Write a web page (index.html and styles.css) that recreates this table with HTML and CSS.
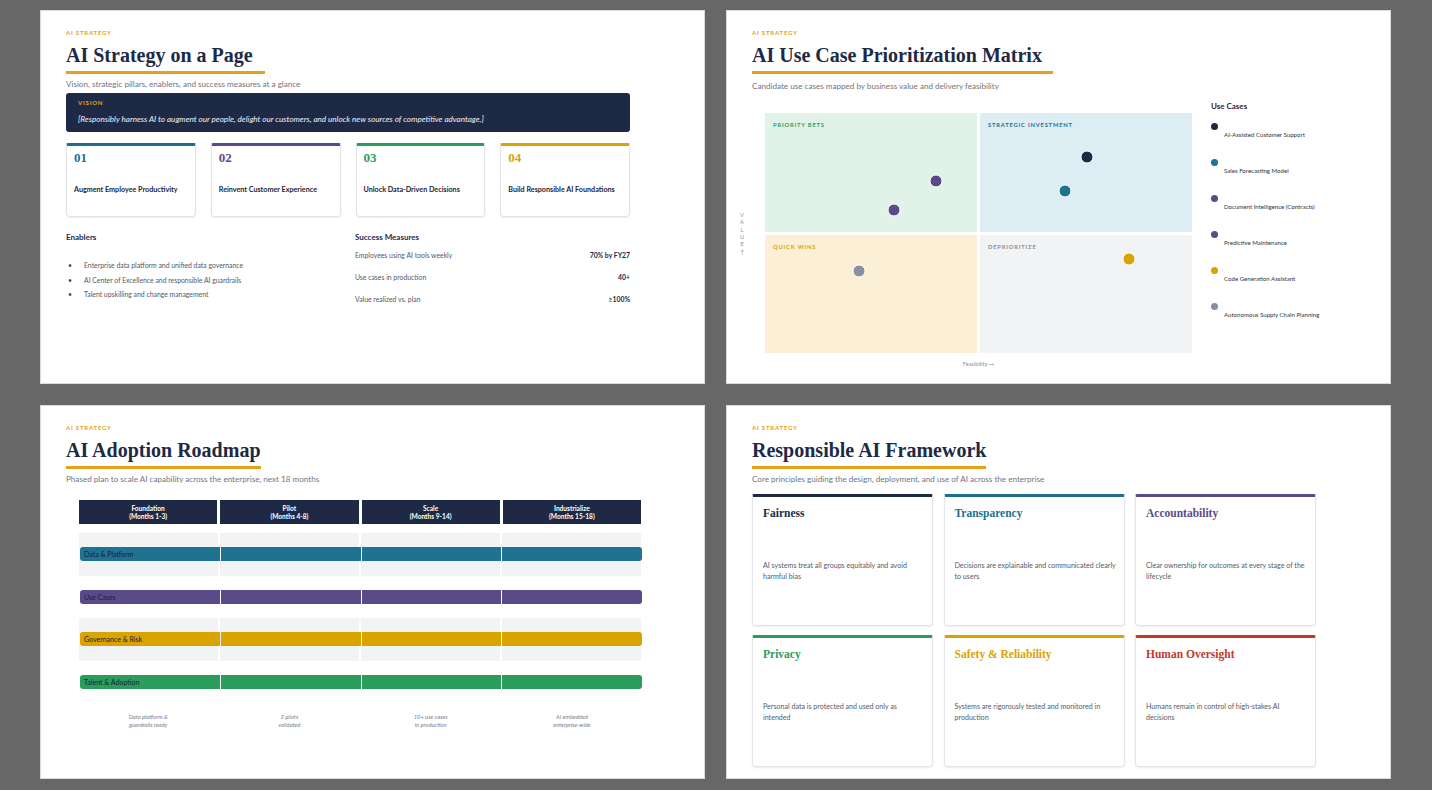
FILE: index.html
```html
<!DOCTYPE html>
<html lang="en">
<head>
<meta charset="utf-8">
<title>AI Strategy Deck</title>
<link rel="stylesheet" href="styles.css">
</head>
<body>
<main class="deck">

  <!-- Slide 1 -->
  <section class="slide">
    <div class="eyebrow">AI STRATEGY</div>
    <h1 class="title title-ext">AI Strategy on a Page</h1>
    <p class="subtitle">Vision, strategic pillars, enablers, and success measures at a glance</p>
    <div class="content">
      <div class="vision">
        <div class="vision-label">VISION</div>
        <p class="vision-text">[Responsibly harness AI to augment our people, delight our customers, and unlock new sources of competitive advantage.]</p>
      </div>
      <div class="pillars">
        <div class="pillar c-teal"><div class="pillar-num">01</div><div class="pillar-name">Augment Employee Productivity</div></div>
        <div class="pillar c-purple"><div class="pillar-num">02</div><div class="pillar-name">Reinvent Customer Experience</div></div>
        <div class="pillar c-green"><div class="pillar-num">03</div><div class="pillar-name">Unlock Data-Driven Decisions</div></div>
        <div class="pillar c-gold"><div class="pillar-num">04</div><div class="pillar-name">Build Responsible AI Foundations</div></div>
      </div>
      <div class="columns">
        <div class="col">
          <h3 class="col-head">Enablers</h3>
          <ul class="enablers">
            <li><span class="bullet">•</span>Enterprise data platform and unified data governance</li>
            <li><span class="bullet">•</span>AI Center of Excellence and responsible AI guardrails</li>
            <li><span class="bullet">•</span>Talent upskilling and change management</li>
          </ul>
        </div>
        <div class="col">
          <h3 class="col-head">Success Measures</h3>
          <div class="measures">
            <div class="measure"><span>Employees using AI tools weekly</span><b>70% by FY27</b></div>
            <div class="measure"><span>Use cases in production</span><b>40+</b></div>
            <div class="measure"><span>Value realized vs. plan</span><b>≥100%</b></div>
          </div>
        </div>
      </div>
    </div>
  </section>

  <!-- Slide 2 -->
  <section class="slide">
    <div class="eyebrow">AI STRATEGY</div>
    <h1 class="title title-ext2">AI Use Case Prioritization Matrix</h1>
    <p class="subtitle subtitle-low">Candidate use cases mapped by business value and delivery feasibility</p>
    <div class="chart">
      <div class="y-axis"><span>V</span><span>A</span><span>L</span><span>U</span><span>E</span><span>↑</span></div>
      <div class="plot">
        <div class="matrix">
          <div class="quad q-green">PRIORITY BETS</div>
          <div class="quad q-blue">STRATEGIC INVESTMENT</div>
          <div class="quad q-yellow">QUICK WINS</div>
          <div class="quad q-gray">DEPRIORITIZE</div>
          <span class="pt bg-navy" style="left:75.4%;top:18.3%"></span>
          <span class="pt bg-teal" style="left:70.3%;top:32.5%"></span>
          <span class="pt bg-purple" style="left:40.0%;top:28.3%"></span>
          <span class="pt bg-purple" style="left:30.2%;top:40.4%"></span>
          <span class="pt bg-gold" style="left:85.2%;top:60.8%"></span>
          <span class="pt bg-gray" style="left:22.0%;top:65.8%"></span>
        </div>
        <div class="x-axis">Feasibility →</div>
      </div>
      <div class="legend">
        <h3 class="legend-head">Use Cases</h3>
        <div class="legend-item"><span class="ldot bg-navy"></span><span class="ltext">AI-Assisted Customer Support</span></div>
        <div class="legend-item"><span class="ldot bg-teal"></span><span class="ltext">Sales Forecasting Model</span></div>
        <div class="legend-item"><span class="ldot bg-purple"></span><span class="ltext">Document Intelligence (Contracts)</span></div>
        <div class="legend-item"><span class="ldot bg-purple"></span><span class="ltext">Predictive Maintenance</span></div>
        <div class="legend-item"><span class="ldot bg-gold"></span><span class="ltext">Code Generation Assistant</span></div>
        <div class="legend-item"><span class="ldot bg-gray"></span><span class="ltext">Autonomous Supply Chain Planning</span></div>
      </div>
    </div>
  </section>

  <!-- Slide 3 -->
  <section class="slide">
    <div class="eyebrow">AI STRATEGY</div>
    <h1 class="title">AI Adoption Roadmap</h1>
    <p class="subtitle">Phased plan to scale AI capability across the enterprise, next 18 months</p>
    <div class="roadmap">
      <div class="phases">
        <div class="phase">Foundation<br>(Months 1-3)</div>
        <div class="phase">Pilot<br>(Months 4-8)</div>
        <div class="phase">Scale<br>(Months 9-14)</div>
        <div class="phase">Industrialize<br>(Months 15-18)</div>
      </div>
      <div class="tracks">
        <div class="track band">
          <div class="cells"><span></span><span></span><span></span><span></span></div>
          <div class="bar bar-teal"><span class="seg">Data &amp; Platform</span><span class="seg"></span><span class="seg"></span><span class="seg"></span></div>
        </div>
        <div class="track">
          <div class="cells"><span></span><span></span><span></span><span></span></div>
          <div class="bar bar-purple"><span class="seg">Use Cases</span><span class="seg"></span><span class="seg"></span><span class="seg"></span></div>
        </div>
        <div class="track band">
          <div class="cells"><span></span><span></span><span></span><span></span></div>
          <div class="bar bar-gold"><span class="seg">Governance &amp; Risk</span><span class="seg"></span><span class="seg"></span><span class="seg"></span></div>
        </div>
        <div class="track">
          <div class="cells"><span></span><span></span><span></span><span></span></div>
          <div class="bar bar-green"><span class="seg">Talent &amp; Adoption</span><span class="seg"></span><span class="seg"></span><span class="seg"></span></div>
        </div>
      </div>
      <div class="milestones">
        <div class="milestone">Data platform &amp;<br>guardrails ready</div>
        <div class="milestone">3 pilots<br>validated</div>
        <div class="milestone">10+ use cases<br>in production</div>
        <div class="milestone">AI embedded<br>enterprise-wide</div>
      </div>
    </div>
  </section>

  <!-- Slide 4 -->
  <section class="slide">
    <div class="eyebrow">AI STRATEGY</div>
    <h1 class="title">Responsible AI Framework</h1>
    <p class="subtitle">Core principles guiding the design, deployment, and use of AI across the enterprise</p>
    <div class="principles">
      <div class="principle c-navy"><h2 class="principle-title">Fairness</h2><p class="principle-text">AI systems treat all groups equitably and avoid harmful bias</p></div>
      <div class="principle c-teal"><h2 class="principle-title">Transparency</h2><p class="principle-text">Decisions are explainable and communicated clearly to users</p></div>
      <div class="principle c-purple"><h2 class="principle-title">Accountability</h2><p class="principle-text">Clear ownership for outcomes at every stage of the lifecycle</p></div>
      <div class="principle c-green"><h2 class="principle-title">Privacy</h2><p class="principle-text">Personal data is protected and used only as intended</p></div>
      <div class="principle c-gold"><h2 class="principle-title">Safety &amp; Reliability</h2><p class="principle-text">Systems are rigorously tested and monitored in production</p></div>
      <div class="principle c-red"><h2 class="principle-title">Human Oversight</h2><p class="principle-text">Humans remain in control of high-stakes AI decisions</p></div>
    </div>
  </section>

</main>
</body>
</html>
```

FILE: styles.css
```css
* { box-sizing: border-box; margin: 0; padding: 0; }

html, body { height: 100%; }

body {
  background: #676767;
  font-family: Lato, "Liberation Sans", sans-serif;
  color: #1e2a45;
}

.deck {
  display: grid;
  grid-template-columns: 665px 665px;
  grid-template-rows: 374px 374px;
  gap: 21px;
  padding: 10px 0 0 40px;
}

.slide {
  background: #fff;
  box-shadow: inset 0 0 0 1px #dadada;
  padding: 19px 0 0 26px;
  overflow: hidden;
}

/* ---------- shared header ---------- */
.eyebrow {
  font-size: 6px;
  font-weight: 700;
  letter-spacing: 0.8px;
  line-height: 8px;
  color: #e3a21a;
}

.title {
  display: inline-block;
  margin-top: 6px;
  font-family: "Liberation Serif", serif;
  font-weight: 700;
  font-size: 20px;
  line-height: 24px;
  color: #1e2a45;
  padding-bottom: 4px;
  border-bottom: 3px solid #e3a21a;
}
.title-ext { padding-right: 12px; }
.title-ext2 { padding-right: 11px; }

.subtitle {
  margin-top: 5px;
  font-size: 8.1px;
  line-height: 10px;
  color: #6f7582;
}
.subtitle-low { margin-top: 7px; }

/* ---------- colours ---------- */
.c-navy   { --accent: #1e2a45; }
.c-teal   { --accent: #1f6f8b; }
.c-purple { --accent: #5b4a8a; }
.c-green  { --accent: #2a9d5c; }
.c-gold   { --accent: #d9a300; }
.c-red    { --accent: #c0392b; }

.bg-navy   { background: #1e2a45; }
.bg-teal   { background: #1f7391; }
.bg-purple { background: #5b4a8a; }
.bg-green  { background: #2a9d5c; }
.bg-gold   { background: #d9a300; }
.bg-gray   { background: #8a8fa0; }

/* ---------- slide 1 ---------- */
.content { width: 564px; }

.vision {
  margin-top: 4px;
  height: 39px;
  background: #1e2a45;
  border-radius: 3px;
  padding: 6px 12px 0;
}
.vision-label {
  font-size: 6px;
  font-weight: 700;
  letter-spacing: 0.8px;
  line-height: 8px;
  color: #e3a21a;
}
.vision-text {
  margin-top: 7px;
  font-size: 8.1px;
  font-style: italic;
  line-height: 10px;
  color: #eef0f5;
}

.pillars {
  margin-top: 11px;
  display: grid;
  grid-template-columns: repeat(4, 1fr);
  gap: 15px;
}
.pillar {
  height: 74px;
  border: 1px solid #e2e4e8;
  border-top: 3px solid var(--accent);
  border-radius: 2px 2px 4px 4px;
  box-shadow: 0 1px 2px rgba(0, 0, 0, 0.08);
  padding: 5px 7px 0;
}
.pillar-num {
  font-family: "Liberation Serif", serif;
  font-weight: 700;
  font-size: 13px;
  line-height: 14px;
  color: var(--accent);
}
.pillar-name {
  margin-top: 20px;
  font-size: 7.2px;
  font-weight: 700;
  line-height: 10px;
  color: #1f2430;
}

.columns {
  margin-top: 15px;
  display: grid;
  grid-template-columns: 1fr 1fr;
  gap: 14px;
}
.col-head {
  font-size: 8px;
  font-weight: 700;
  line-height: 10px;
  color: #1e2a45;
}
.enablers {
  list-style: none;
  margin-top: 16px;
}
.enablers li {
  display: flex;
  font-size: 6.85px;
  line-height: 14.5px;
  color: #525865;
}
.bullet {
  width: 16px;
  margin-left: 2px;
  color: #3a3f4a;
}
.measures { margin-top: 2px; }
.measure {
  display: flex;
  justify-content: space-between;
  font-size: 6.85px;
  line-height: 22px;
  color: #525865;
}
.measure b { color: #1e2a45; font-weight: 700; }

/* ---------- slide 2 ---------- */
.chart {
  margin-top: 9px;
  margin-left: -20px;
  display: grid;
  grid-template-columns: 20px 427px auto;
  column-gap: 13px;
  align-items: start;
}
.y-axis {
  margin-top: 13px;
  height: 240px;
  display: flex;
  flex-direction: column;
  justify-content: center;
  align-items: center;
  font-size: 5.6px;
  line-height: 7.3px;
  color: #8a8f9c;
}
.plot { padding-top: 13px; }
.matrix {
  position: relative;
  height: 240px;
  display: grid;
  grid-template-columns: 1fr 1fr;
  grid-template-rows: 1fr 1fr;
  gap: 3px;
}
.quad {
  padding: 8px;
  font-size: 5.8px;
  font-weight: 700;
  letter-spacing: 0.8px;
  line-height: 8px;
}
.q-green  { background: #e1f3e8; color: #2f9e5f; }
.q-blue   { background: #ddedf4; color: #1f6f8b; }
.q-yellow { background: #fbf0d6; color: #d9a300; }
.q-gray   { background: #f1f3f5; color: #8a8fa0; }

.pt {
  position: absolute;
  width: 13px;
  height: 13px;
  border-radius: 50%;
  border: 1.5px solid #fff;
  transform: translate(-50%, -50%);
}

.x-axis {
  margin-top: 7px;
  text-align: center;
  font-size: 5.6px;
  line-height: 8px;
  color: #8a8f9c;
}

.legend { margin-left: 6px; }
.legend-head {
  font-size: 8px;
  font-weight: 700;
  line-height: 12px;
  color: #1e2a45;
}
.legend-item {
  height: 36px;
}
.legend-item:first-of-type { margin-top: 10.5px; }
.ldot {
  display: block;
  width: 7px;
  height: 7px;
  border-radius: 50%;
}
.ltext {
  display: block;
  margin-top: 1.5px;
  padding-left: 13px;
  font-size: 6.1px;
  line-height: 8px;
  color: #2e3340;
}

/* ---------- slide 3 ---------- */
.roadmap {
  margin-left: 13px;
  width: 562px;
}
.phases {
  margin-top: 16px;
  display: grid;
  grid-template-columns: repeat(4, 1fr);
  gap: 3px;
}
.phase {
  height: 24px;
  padding-top: 4px;
  background: #1e2a45;
  color: #fff;
  font-size: 6.6px;
  font-weight: 700;
  line-height: 8px;
  text-align: center;
}
.tracks { margin-top: 9px; }
.track {
  display: grid;
  height: 42.5px;
}
.track > * { grid-area: 1 / 1; }
.cells {
  display: grid;
  grid-template-columns: repeat(4, 1fr);
  gap: 2px;
}
.band .cells span { background: #f1f3f5; }
.bar {
  align-self: center;
  height: 14px;
  margin: 0 -1px 0 1px;
  display: grid;
  grid-template-columns: repeat(4, 1fr);
  gap: 1px;
}
.bar .seg {
  font-size: 7px;
  line-height: 14px;
  padding-left: 4px;
  color: #18203a;
  white-space: nowrap;
}
.bar-teal .seg   { background: #1f7391; }
.bar-purple .seg { background: #5b4a8a; }
.bar-gold .seg   { background: #d9a300; }
.bar-green .seg  { background: #2a9d5c; }
.bar .seg:first-child { border-radius: 3px 0 0 3px; }
.bar .seg:last-child  { border-radius: 0 3px 3px 0; }

.milestones {
  margin-top: 10px;
  display: grid;
  grid-template-columns: repeat(4, 1fr);
  gap: 3px;
}
.milestone {
  text-align: center;
  font-size: 5.8px;
  font-style: italic;
  line-height: 8px;
  color: #7b808c;
}

/* ---------- slide 4 ---------- */
.principles {
  margin-top: 10px;
  width: 564px;
  display: grid;
  grid-template-columns: repeat(3, 181px);
  grid-auto-rows: 132px;
  column-gap: 10.5px;
  row-gap: 9px;
}
.principle {
  border: 1px solid #e2e4e8;
  border-top: 3px solid var(--accent);
  border-radius: 2px 2px 4px 4px;
  box-shadow: 0 1px 2px rgba(0, 0, 0, 0.08);
  padding: 9px 7px 0 10px;
}
.principle-title {
  font-family: "Liberation Serif", serif;
  font-weight: 700;
  font-size: 11.5px;
  line-height: 14px;
  color: var(--accent);
}
.principle-text {
  margin-top: 39.5px;
  font-size: 7.1px;
  line-height: 11px;
  color: #555b68;
}
```
